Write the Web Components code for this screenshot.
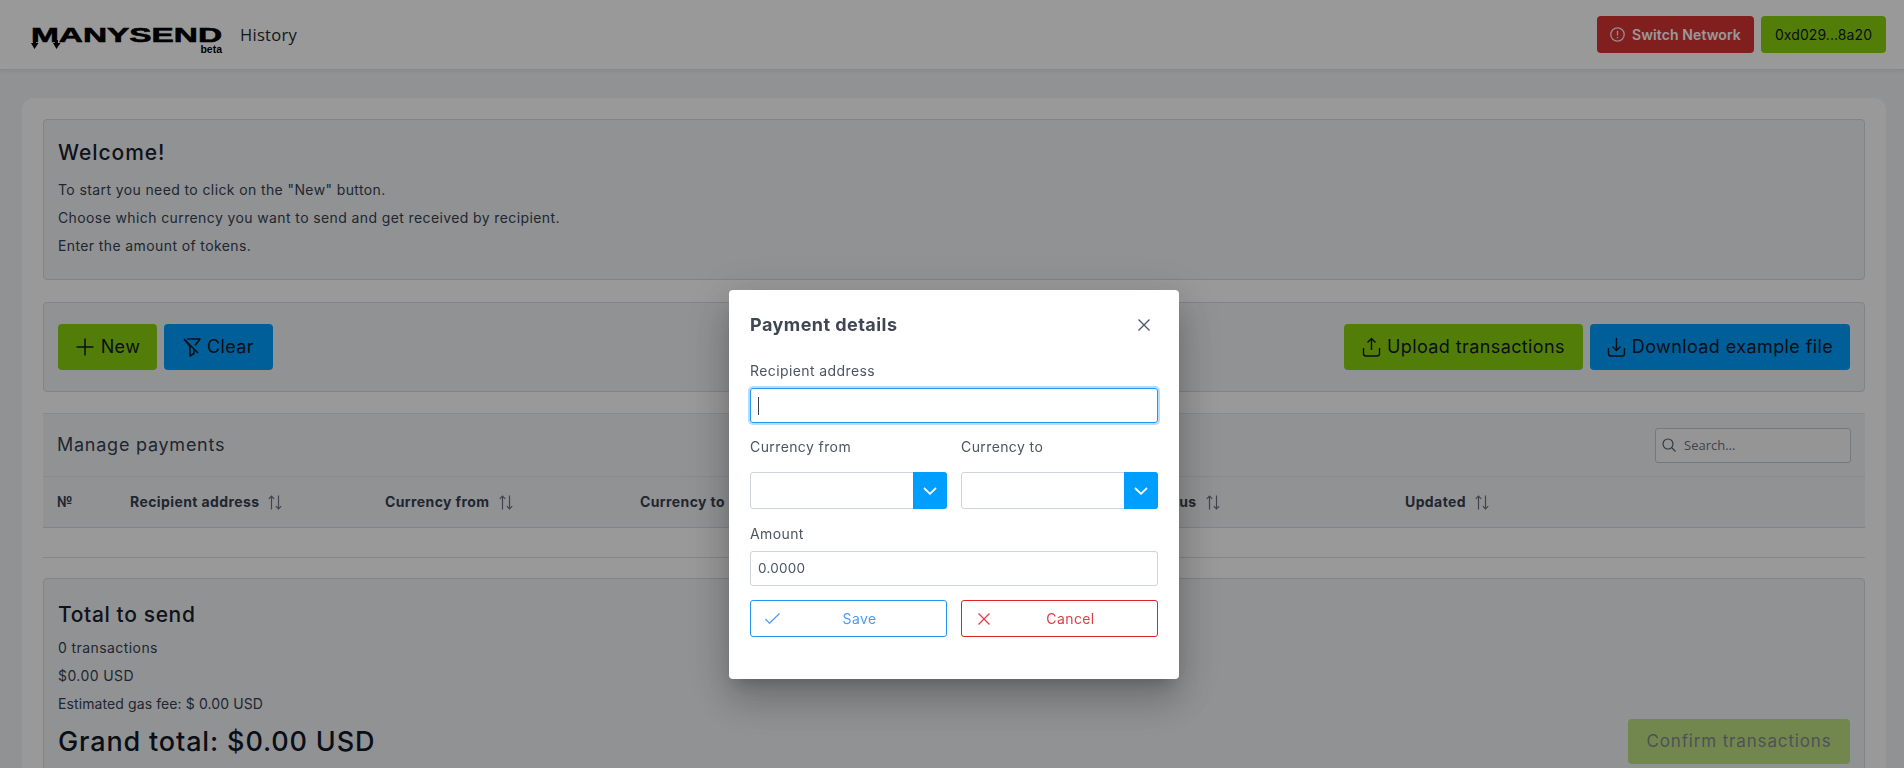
<!DOCTYPE html>
<html lang="en"><head><meta charset="utf-8"><title>ManySend</title>
<style>
html,body{margin:0;height:768px;overflow:hidden}
body{background:#f2f4f7;font-family:Inter,"Open Sans",sans-serif;color:#1e293b}
</style></head><body>
<app-header></app-header>
<main-card>
  <info-panel></info-panel>
  <action-panel></action-panel>
  <payments-table></payments-table>
  <total-panel></total-panel>
</main-card>
<modal-mask></modal-mask>
<payment-modal></payment-modal>
<script>
const def=(n,html,init)=>customElements.define(n,class extends HTMLElement{constructor(){super();this.attachShadow({mode:'open'}).innerHTML=html;}connectedCallback(){init&&init(this)}});
const ic={
 plus:'<svg width="20" height="20" viewBox="0 0 20 20" fill="none" stroke="currentColor" stroke-width="1.5"><path d="M10 1.5v17M1.5 10h17"/></svg>',
 filter:'<svg width="18" height="19" viewBox="0 0 18 19" fill="none" stroke="currentColor" stroke-width="1.5" stroke-linejoin="round"><path d="M4 1h13l-5 6.500M1 1l6 7.500V18l4-2.500V11M1 1l14 14" /></svg>',
 up:'<svg width="19" height="20" viewBox="0 0 19 20" fill="none" stroke="currentColor" stroke-width="1.4"><path d="M9.500 13V2M5.500 5.500l4-4 4 4M1.500 11v5.500a2.500 2.500 0 0 0 2.500 2.500h11a2.500 2.500 0 0 0 2.500-2.500V11"/></svg>',
 down:'<svg width="19" height="20" viewBox="0 0 19 20" fill="none" stroke="currentColor" stroke-width="1.4"><path d="M9.500 1v12M5.500 9.500l4 4 4-4M1.500 11v5.500a2.500 2.500 0 0 0 2.500 2.500h11a2.500 2.500 0 0 0 2.500-2.500V11"/></svg>',
 sort:'<svg width="14" height="15" viewBox="0 0 14 15" fill="none" stroke="currentColor" stroke-width="1.200"><path d="M3.500 14.500V1M.8 3.800 3.500 1l2.700 2.800M10.500 .5V14M7.800 11.200l2.700 2.800 2.700-2.800"/></svg>',
 alert:'<svg width="15" height="15" viewBox="0 0 15 15" fill="none" stroke="currentColor" stroke-width="1.300"><circle cx="7.500" cy="7.500" r="6.700"/><path d="M7.500 3.800v4.600M7.500 10v1.300"/></svg>',
 chev:'<svg width="14" height="8" viewBox="0 0 14 8" fill="none" stroke="#fff" stroke-width="1.800"><path d="M1 1l6 5.800L13 1"/></svg>',
 check:'<svg width="15" height="11" viewBox="0 0 15 11" fill="none" stroke="currentColor" stroke-width="1.200"><path d="M.5 6l4 4.300L14.500 .5"/></svg>',
 x:'<svg width="12" height="12" viewBox="0 0 12 12" fill="none" stroke="currentColor" stroke-width="1.300"><path d="M.5 .5l11 11M11.500 .5l-11 11"/></svg>',
 search:'<svg width="14" height="14" viewBox="0 0 14 14" fill="none" stroke="currentColor" stroke-width="1.100"><circle cx="6" cy="6" r="5"/><path d="M9.700 9.700 13.500 13.500"/></svg>'
};
def('app-button',`<style>
:host{display:inline-flex;box-sizing:border-box;height:46px;align-items:center;justify-content:center;gap:6px;border-radius:4px;font:400 18px/1 Inter,sans-serif;letter-spacing:.4px;color:#111827;white-space:nowrap;background:var(--bg,#8ad10f);flex:none}
</style><slot></slot>`);
def('logo-mark',`<style>
:host{display:block;position:relative;width:191px;height:26px;flex:none;color:#000;margin-top:10px}
.w{display:block;font:700 21px/16px "Liberation Sans",Arial,sans-serif;transform:scaleX(1.59);transform-origin:0 0;-webkit-text-stroke:.6px #000;white-space:nowrap;height:16px}
.b{position:absolute;right:0;top:17px;font:700 10.500px/10px "Liberation Sans",Arial,sans-serif}
svg{position:absolute;left:0;top:13px}
</style><span class="w">MANYSEND</span><span class="b">beta</span>
<svg width="30" height="10" viewBox="0 0 30 10" fill="#000"><path d="M2 0h3v3h2.500L3.500 9 0 3h2zM24 0h3v3h2.500l-4 6L22 3h2z"/></svg>`);
def('app-header',`<style>
:host{display:flex;box-sizing:border-box;height:70px;align-items:center;background:#fff;border-bottom:1px solid #e2e4e8;box-shadow:0 1px 4px rgba(0,0,0,.08);padding:0 18px 0 31px;position:relative;z-index:1}
a{margin-left:18px;font:400 16.500px/1 "Open Sans",sans-serif;letter-spacing:.3px;color:#1f2933;margin-top:1px}
.r{margin-left:auto;display:flex;gap:7px}
app-button{height:37px;font-size:14px;letter-spacing:.08px}
.s{--bg:#d83434;color:#fff;font-weight:600;width:157px;gap:7px;letter-spacing:.1px}
.s svg{opacity:.9}
.w{width:125px}
</style><logo-mark></logo-mark><a>History</a><div class="r"><app-button class="s">${ic.alert}<span>Switch Network</span></app-button><app-button class="w">0xd029...8a20</app-button></div>`);
def('main-card',`<style>
:host{display:flex;flex-direction:column;box-sizing:border-box;margin:28px 18px 0 22px;padding:21px 21px 30px;background:#fff;border-radius:12px;border:0;height:800px}
</style><slot></slot>`);
const panelCss=`:host{display:block;box-sizing:border-box;background:#f2f4f7;border:1px solid #d8dbe0;border-radius:4px;padding:18px 14px 19px;color:#374151}
h2{margin:0 0 8px;font:500 21px/30px Inter,sans-serif;color:#1a202c;letter-spacing:.95px}
p{margin:0;font:400 14px/28px Inter,sans-serif;letter-spacing:.39px;color:#374151}`;
def('info-panel',`<style>${panelCss}</style><h2>Welcome!</h2><p>To start you need to click on the "New" button.</p><p>Choose which currency you want to send and get received by recipient.</p><p>Enter the amount of tokens.</p>`);
def('action-panel',`<style>
:host{display:flex;box-sizing:border-box;height:90px;margin-top:22px;background:#f2f4f7;border:1px solid #d8dbe0;border-radius:4px;padding:21px 14px;gap:7px}
.sp{flex:1}
.b{--bg:#009eff}
</style><app-button style="width:99px">${ic.plus}<span>New</span></app-button><app-button class="b" style="width:109px">${ic.filter}<span>Clear</span></app-button><span class="sp"></span><app-button style="width:239px">${ic.up}<span>Upload transactions</span></app-button><app-button class="b" style="width:260px">${ic.down}<span>Download example file</span></app-button>`);
const cols=['Recipient address','Currency from','Currency to','Amount','Status','Updated'];
def('payments-table',`<style>
:host{display:block;box-sizing:border-box;margin-top:21px;background:#f2f4f7;border-top:1px solid #e2e4e8;border-bottom:1px solid #d8dbe0;color:#374151}
.t{display:flex;align-items:center;justify-content:space-between;height:62px;padding:0 14px;border-bottom:1px solid #e2e4e8;font:400 18px/1 Inter,sans-serif;letter-spacing:.75px}
.s{display:flex;align-items:center;gap:8px;box-sizing:border-box;width:196px;height:35px;background:#f8f9fb;border:1px solid #c3c8d0;border-radius:3px;padding:0 6px;font:400 13px/1 "Open Sans",sans-serif;color:#6b7280;letter-spacing:0}
.s svg{color:#4b5563}
.h{display:grid;grid-template-columns:73px repeat(6,255px);height:50px;align-items:center;padding-left:14px;box-sizing:border-box;font:700 14px/1 Inter,sans-serif;letter-spacing:.4px;color:#374151}
.c{display:flex;align-items:center;gap:9px}
.c svg{color:#6b7280}
</style><div class="t"><span>Manage payments</span><div class="s">${ic.search}<span>Search...</span></div></div>
<div class="h"><span>№</span>${cols.map(c=>`<span class="c"><span>${c}</span>${ic.sort}</span>`).join('')}</div>`);
def('total-panel',`<style>
:host{display:flex;box-sizing:border-box;justify-content:space-between;align-items:flex-end;margin-top:50px;position:relative;background:#f2f4f7;border:1px solid #d8dbe0;border-radius:4px;padding:21px 14px 60px;color:#374151}
:host::before{content:"";position:absolute;left:-1px;right:-1px;top:-22px;height:1px;background:#dcdfe4}
h2{margin:0 0 4px;font:500 21px/30px Inter,sans-serif;color:#1a202c;letter-spacing:.63px}
p{margin:0;font:400 14px/28px Inter,sans-serif;letter-spacing:.42px}
.e{letter-spacing:.1px}
.g{font:500 27px/44px Inter,sans-serif;color:#111827;letter-spacing:.85px;margin-top:2px}
app-button{width:222px;height:45px;font-size:17px;letter-spacing:.85px;opacity:.5}
</style><div><h2>Total to send</h2><p>0 transactions</p><p>$0.00 USD</p><p class="e">Estimated gas fee: $ 0.00 USD</p><div class="g">Grand total: $0.00 USD</div></div><app-button>Confirm transactions</app-button>`);
def('modal-mask',`<style>:host{display:block;position:fixed;inset:0;background:rgba(0,0,0,.4);z-index:5}</style>`);
def('payment-modal',`<style>
:host{display:block;position:fixed;left:729px;top:290px;width:450px;height:389px;box-sizing:border-box;background:#fff;border-radius:4px;padding:21px;z-index:6;box-shadow:0 11px 15px -7px rgba(0,0,0,.2),0 24px 38px 3px rgba(0,0,0,.14),0 9px 46px 8px rgba(0,0,0,.12);color:#4b5563;font-family:Inter,sans-serif}
.hd{display:flex;justify-content:space-between;align-items:center;height:28px;color:#374151}
.hd b{font:700 18px/28px Inter,sans-serif;letter-spacing:.45px;color:#3f4754}
.hd span{display:flex;margin-right:8px;color:#4b5563}
label{display:block;font:400 14px/21px Inter,sans-serif;letter-spacing:.4px;color:#4b5563}
.in{display:flex;align-items:center;box-sizing:border-box;height:35px;border:1px solid #ced4da;border-radius:3px;padding:0 7px;font:400 13.500px/1 Inter,sans-serif;letter-spacing:.25px;color:#4b5563}
.f{border-color:#2196f3;box-shadow:0 0 0 2px #b5dcfb;margin-top:7px}
.f i{display:block;width:1px;height:18px;background:#374151}
.row{display:grid;grid-template-columns:197px 197px;gap:14px}
.sel{display:flex;height:37px;box-sizing:border-box;border:1px solid #ced4da;border-radius:3px}
.sel span{margin:-1px -1px -1px auto;width:34px;display:flex;align-items:center;justify-content:center;background:#009eff;border-radius:0 3px 3px 0}
.btn{display:flex;align-items:center;position:relative;justify-content:center;box-sizing:border-box;height:37px;border:1px solid;border-radius:3px;font:400 14px/1 Inter,sans-serif;letter-spacing:.4px;padding-left:22px}
.btn svg{position:absolute;left:14px}
.sv{color:#4b9bf5;border-color:#2196f3}.cn{color:#de3f47;border-color:#dc2626}
.cn svg{left:16px}
</style>
<div class="hd"><b>Payment details</b><span>${ic.x}</span></div>
<label style="margin-top:21px">Recipient address</label>
<div class="in f"><i></i></div>
<div class="row" style="margin-top:13px"><label>Currency from</label><label>Currency to</label></div>
<div class="row" style="margin-top:15px"><div class="sel"><span>${ic.chev}</span></div><div class="sel"><span>${ic.chev}</span></div></div>
<label style="margin-top:14px">Amount</label>
<div class="in" style="margin-top:7px">0.0000</div>
<div class="row" style="margin-top:14px"><div class="btn sv">${ic.check}<span>Save</span></div><div class="btn cn">${ic.x}<span>Cancel</span></div></div>`);
</script>
</body></html>
